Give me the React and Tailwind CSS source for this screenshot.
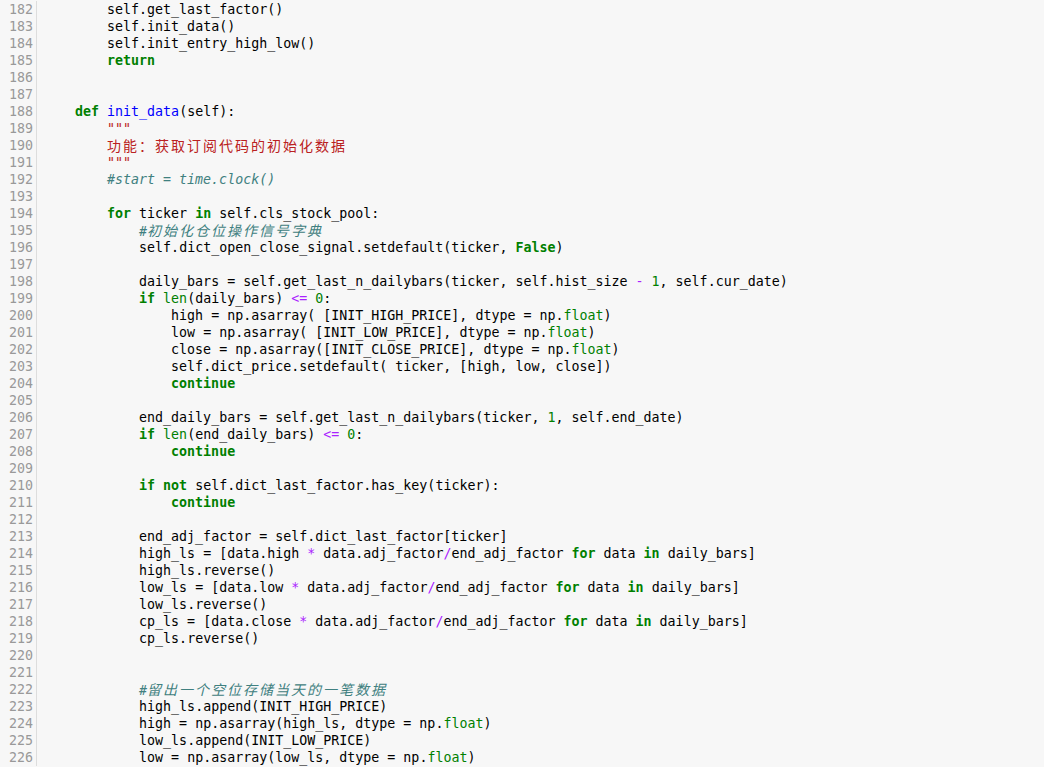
import React from 'react';

const START = 182;

// 源代码（按原样保留缩进）
const LINES = [
  '        self.get_last_factor()',
  '        self.init_data()',
  '        self.init_entry_high_low()',
  '        return',
  '',
  '',
  '    def init_data(self):',
  '        """',
  '        功能：获取订阅代码的初始化数据',
  '        """',
  '        #start = time.clock()',
  '',
  '        for ticker in self.cls_stock_pool:',
  '            #初始化仓位操作信号字典',
  '            self.dict_open_close_signal.setdefault(ticker, False)',
  '',
  '            daily_bars = self.get_last_n_dailybars(ticker, self.hist_size - 1, self.cur_date)',
  '            if len(daily_bars) <= 0:',
  '                high = np.asarray( [INIT_HIGH_PRICE], dtype = np.float)',
  '                low = np.asarray( [INIT_LOW_PRICE], dtype = np.float)',
  '                close = np.asarray([INIT_CLOSE_PRICE], dtype = np.float)',
  '                self.dict_price.setdefault( ticker, [high, low, close])',
  '                continue',
  '',
  '            end_daily_bars = self.get_last_n_dailybars(ticker, 1, self.end_date)',
  '            if len(end_daily_bars) <= 0:',
  '                continue',
  '',
  '            if not self.dict_last_factor.has_key(ticker):',
  '                continue',
  '',
  '            end_adj_factor = self.dict_last_factor[ticker]',
  '            high_ls = [data.high * data.adj_factor/end_adj_factor for data in daily_bars]',
  '            high_ls.reverse()',
  '            low_ls = [data.low * data.adj_factor/end_adj_factor for data in daily_bars]',
  '            low_ls.reverse()',
  '            cp_ls = [data.close * data.adj_factor/end_adj_factor for data in daily_bars]',
  '            cp_ls.reverse()',
  '',
  '',
  '            #留出一个空位存储当天的一笔数据',
  '            high_ls.append(INIT_HIGH_PRICE)',
  '            high = np.asarray(high_ls, dtype = np.float)',
  '            low_ls.append(INIT_LOW_PRICE)',
  '            low = np.asarray(low_ls, dtype = np.float)',
];

// docstring 行
const DOC_LINES = new Set([189, 190, 191]);

const KEYWORDS = new Set(['def', 'return', 'for', 'in', 'if', 'not', 'continue', 'False', 'True', 'None']);
const BUILTINS = new Set(['len', 'float']);

// 中文字符占两个等宽列
const Cjk = ({ text }) => {
  const parts = text.split(/([\u3000-\u9fff\uff00-\uffef]+)/);
  return parts.map((p, i) =>
    /[\u3000-\u9fff\uff00-\uffef]/.test(p) ? (
      <span key={i} className="text-[14px] tracking-[2px] font-['Noto_Sans_CJK_SC',sans-serif]">{p}</span>
    ) : (
      <React.Fragment key={i}>{p}</React.Fragment>
    )
  );
};

const tokenize = (line, lineNo) => {
  const indent = line.match(/^ */)[0];
  const body = line.slice(indent.length);
  if (DOC_LINES.has(lineNo)) {
    return [indent, <span key="d" className="text-[#ba2121]"><Cjk text={body} /></span>];
  }
  const out = [indent];
  const re = /(#.*$)|(\b\d+\b)|(<=|>=|==|[*\/\-+<>])|([A-Za-z_]\w*)|([^#\dA-Za-z_*\/\-+<>]+)/g;
  let m;
  let prev = '';
  let k = 0;
  while ((m = re.exec(body)) !== null) {
    const [tok, comment, num, op, ident] = m;
    if (comment) {
      out.push(<span key={k++} className="italic text-[#408080]"><Cjk text={tok} /></span>);
    } else if (num) {
      out.push(<span key={k++} className="text-[#008000]">{tok}</span>);
    } else if (op) {
      out.push(<span key={k++} className="text-[#aa22ff]">{tok}</span>);
    } else if (ident) {
      if (KEYWORDS.has(tok)) {
        out.push(<span key={k++} className="font-bold text-[#008000]">{tok}</span>);
      } else if (BUILTINS.has(tok)) {
        out.push(<span key={k++} className="text-[#008000]">{tok}</span>);
      } else if (prev === 'def') {
        out.push(<span key={k++} className="text-[#0000ff]">{tok}</span>);
      } else {
        out.push(<React.Fragment key={k++}>{tok}</React.Fragment>);
      }
      prev = tok;
    } else {
      out.push(<React.Fragment key={k++}>{tok}</React.Fragment>);
    }
  }
  return out;
};

export default function App() {
  return (
    <div className="w-[1044px] h-[767px] overflow-hidden bg-[#f7f7f7] font-['DejaVu_Sans_Mono',monospace] text-[13.3px] text-[#000] pt-[1px]">
      {LINES.map((line, i) => {
        const n = START + i;
        return (
          <div key={n} className="flex h-[17px] leading-[17px]">
            <div className="w-[37px] shrink-0 border-r border-[#dddddd] pr-[3px] text-right text-[#999999]">
              {n}
            </div>
            <pre className="pl-[6px] font-['DejaVu_Sans_Mono',monospace] whitespace-pre">
              {tokenize(line, n)}
            </pre>
          </div>
        );
      })}
    </div>
  );
}
